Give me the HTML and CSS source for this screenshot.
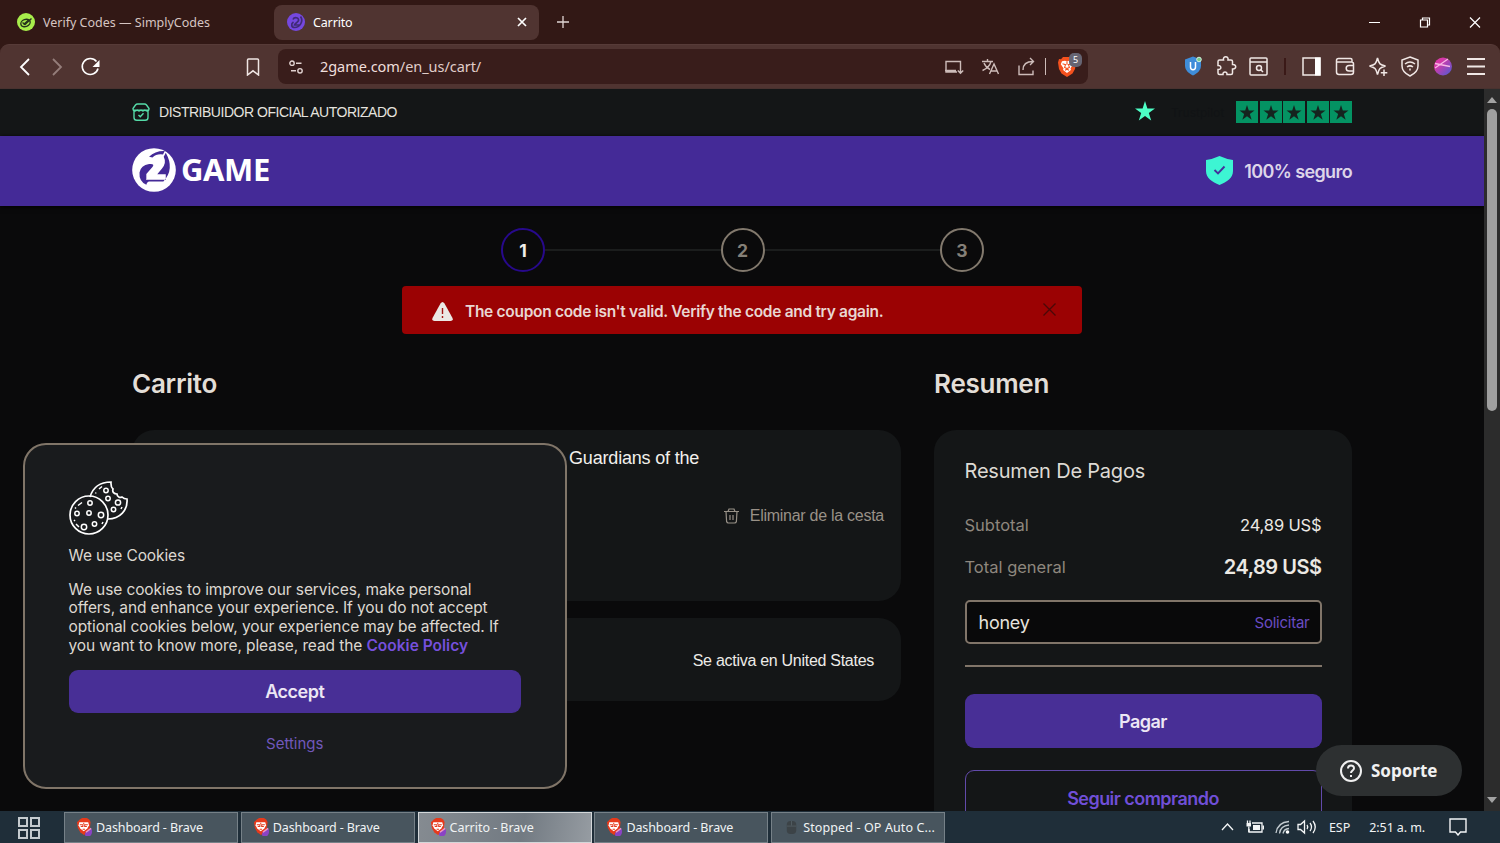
FILE: index.html
```html
<!DOCTYPE html>
<html lang="es">
<head>
<meta charset="utf-8">
<title>Carrito</title>
<link rel="stylesheet" href="styles.css">
</head>
<body>
<svg class="defs" aria-hidden="true">
  <symbol id="star" viewBox="0 0 20 20"><path d="M10 0l2.400 7.400h7.600l-6.200 4.600 2.400 7.500L10 14.900l-6.200 4.600L6.200 12 0 7.400h7.600z"/></symbol>
  <symbol id="brave" viewBox="0 0 18 20">
    <path fill="#f4511e" d="M5 0h8l2 2.200 2-.2 1 3.500-1 6.500-2.500 4.500L9 20l-5.500-3.500L1 12 0 5.500 1 2l2 .2z"/>
    <path fill="#fff" d="M4 4.300l3-.5 2 .7 2-.7 3 .5 1.200 3-2.700 3.900.4 1.800L9 16l-3.900-3 .4-1.800-2.700-3.900z"/>
    <path fill="none" stroke="#f4511e" stroke-width="1.100" d="M4.500 6.800l3 .8-.9 2.800L9 11.600l2.400-1.200-.9-2.800 3-.8M9 4.500v3.200M7 13.200l2-1 2 1"/>
  </symbol>
  <symbol id="bravetask" viewBox="0 0 18 20"><path fill="#e63a1c" d="M4 1.500L6.500 0h5L14 1.500l1.500 3-1 7-2.500 4-3.500 2.500-4-3L2 10.500 1 4.500z"/><path fill="#fff" d="M3.500 4.500h9.500l.8 3-1.800 3.500-3.800 3-3.700-3L2.700 7.500z"/><path fill="none" stroke="#e63a1c" stroke-width="1.100" d="M4 7h3.300v2H5M12.500 7H9.200v2h2.300M8.200 5v1.500M7 11.800h2.500"/><path d="M16.500 11q1.500 5-1.500 8h-5q-1.500-3 1.500-5z" fill="#8a43c4"/><path d="M10.500 15l5.500-4" stroke="#f29ac6" stroke-width="1.500"/></symbol>
</svg>
<div class="screen">
  <div class="tabs">
    <div class="tab tab-idle">
      <svg class="fav" viewBox="0 0 18 18"><circle cx="9" cy="9" r="9" fill="#a8ee4b"/><g fill="none" stroke="#26331c" stroke-width="1.400"><ellipse cx="8.500" cy="10" rx="4.800" ry="3.500" transform="rotate(-20 8.500 10)"/><path d="M5.500 9.500l2.500 2L14.500 5.500M6.500 11.500l5-4.500"/></g></svg>
      <span class="t-simply">Verify Codes — SimplyCodes</span>
    </div>
    <div class="tab tab-active">
      <svg class="fav" viewBox="0 0 18 18"><circle cx="9" cy="9" r="9" fill="#7548df"/><path d="M6 6.500C7 4 12 4 11.500 7.500 11 9.500 8 10 7.500 12H13M13.500 3.500c3.500 5-1 11-6 11-3 0-4-3.500-1-5.500" fill="none" stroke="#402a78" stroke-width="1.700"/></svg>
      <span class="t-carrito">Carrito</span>
      <svg class="close" viewBox="0 0 10 10"><path d="M1 1l8 8M9 1L1 9" stroke="#fff" stroke-width="1.700"/></svg>
    </div>
    <svg class="plus" viewBox="0 0 12 12"><path d="M6 0v12M0 6h12" stroke="#e0d5d3" stroke-width="1.300"/></svg>
    <svg class="winctl" viewBox="0 0 114 14" fill="none" stroke="#fff" stroke-width="1.200"><path d="M1 7.500h11M102 2.500l10 10M112 2.500l-10 10"/><path d="M52.500 5h7v7h-7zM54.500 4.500V3h7v7H60"/></svg>
  </div>
  <div class="toolbar">
    <svg class="nav" viewBox="0 0 100 22" fill="none" stroke="#fff" stroke-width="1.800"><path d="M18 3l-8 8 8 8"/><path d="M42 3l8 8-8 8" stroke="#957e7b"/><path d="M85.500 5.500a8 8 0 1 0 1.500 7" stroke-width="1.600"/><path d="M88.500 4v7h-7z" fill="#fff" stroke="none"/></svg>
    <svg class="bookmark" viewBox="0 0 14 18"><path d="M2.500 1h9q1 0 1 1v15L7 12.800 1.500 17V2q0-1 1-1z" fill="none" stroke="#f0e6e4" stroke-width="1.500"/></svg>
    <div class="address">
      <svg class="tune" viewBox="0 0 15 14" fill="none" stroke="#e1d2d0" stroke-width="1.400"><circle cx="3" cy="3.200" r="2.200"/><path d="M7 3.200h5.500M2 10.800h5"/><circle cx="11" cy="10.800" r="2.200"/></svg>
      <span class="url">2game.com<i>/en_us/cart/</i></span>
      <svg class="addr-icons" viewBox="0 0 146 28" fill="none" stroke="#cdbcb9" stroke-width="1.400">
        <path d="M13 19H2V8.500h14.500V14M1 17.500h11M16.500 14v6M13.800 17.500l2.700 2.700 2.700-2.700"/>
        <path d="M38 8.500h11M43.500 6v2.500M47 8.500c-1 4-4 7-8.500 9M40 10c1.500 4 4 5.500 6 6.500M45.500 21l4.500-10 4.500 10M47 18h6"/>
        <path d="M75 12.500v9h14v-4M79 17c0-6 3-8.500 10-8.500M86 5l3.500 3.500L86 12"/>
        <path d="M101.500 5v17" stroke-width="1"/>
        <use href="#brave" x="114" y="4" width="18" height="20" stroke="none"/>
      </svg>
      <span class="badge">5</span>
    </div>
    <svg class="tools" viewBox="0 0 304 28" fill="none" stroke="#f0e7e5" stroke-width="1.500">
      <path d="M9 3.500l8 3v6c0 5-4 8-8 10-4-2-8-5-8-10v-6z" fill="#3f8dd9" stroke="none"/><path d="M6.500 9v5c0 3.500 5 3.500 5 0V9" stroke="#fff"/><circle cx="15" cy="6.500" r="2.300" fill="#75c98d" stroke="#d7f4e2" stroke-width="1"/>
      <path d="M35.500 7h4c-1-4.500 5.500-4.500 4.500 0h3q1.500 0 1.500 1.500v3c4.300-.5 4.300 5 0 4.500v4q0 1.500-1.500 1.500h-4c.3-3.500-4.300-3.500-4 0h-3.500q-1.500 0-1.500-1.500v-3.500c3.800.3 3.800-4.300 0-4V8.500q0-1.500 1.500-1.500z"/>
      <path d="M67 5h15q1 0 1 1v15q0 1-1 1H67q-1 0-1-1V6q0-1 1-1zM66 9h17M76.500 16.500l2.500 2.500"/><circle cx="75" cy="15" r="2.500"/>
      <path d="M101 5v17" stroke="#33110f" stroke-width="1.500"/>
      <path d="M119 5h17v17h-17z"/><path d="M131 4.500h5.500v18H131z" fill="#fff" stroke="none"/>
      <path d="M168 9V7q0-1.500-1.500-1.500h-12Q152.500 5.500 152.500 7.500v11.500q0 2.500 2.500 2.500h12q2.500 0 2.500-2.500v-8Q169.500 9 167.500 9H153M170 12.500h-5q-2.800 0-2.800 2.800t2.800 2.800h5"/>
      <path d="M193.500 5c1.500 6 2.500 7 8 8-5.500 1.500-6.500 2.500-8 8.500-1.500-6-2.500-7-8-8.500 5.500-1 6.500-2 8-8z"/><path d="M200 16.500v6.500M196.800 19.700h6.500"/>
      <path d="M226 4l8 3v6c0 5-4 8-8 10-4-2-8-5-8-10V7z" stroke-width="1.500"/><path d="M221 11c3-2.500 7-2.500 10 0M223 14c2-1.500 4-1.500 6 0M226 15.500v2" stroke-width="1.500"/>
      <circle cx="259" cy="13.500" r="9" fill="url(#ball)" stroke="none"/><path d="M251 15l13-9M251 10.500l15 3" stroke="#f9b5e6" stroke-width="1.300"/>
      <path d="M283 6h18M283 13.500h18M283 21h18" stroke-width="1.800"/>
      <defs><linearGradient id="ball" x1="0" y1="0" x2="1" y2="1"><stop offset=".3" stop-color="#d638a8"/><stop offset="1" stop-color="#485cd4"/></linearGradient></defs>
    </svg>
  </div>
  <div class="view">
    <div class="page">
      <div class="topbar">
        <svg class="shop" viewBox="0 0 18 18" fill="none" stroke="#55dba8" stroke-width="1.400"><path d="M2 7.500v7q0 2.800 2.800 2.800h8.400q2.800 0 2.800-2.800v-7M6.500 12l1.800 1.800 3.200-3.500M1 7.300h16M1.200 7L1 5.500 3.500 2Q4.300 1 5.500 1h7q1.200 0 2 1L17 5.500 16.800 7q-1.900 1.800-3.900 0-2 1.800-3.900 0-2 1.800-3.900 0-2 1.800-3.900 0z"/></svg>
        <span class="dist">DISTRIBUIDOR OFICIAL AUTORIZADO</span>
        <svg class="tpstar" fill="#4dffc6"><use href="#star"/></svg>
        <span class="tp">Trustpilot</span>
        <div class="stars"><b><svg><use href="#star"/></svg></b><b><svg><use href="#star"/></svg></b><b><svg><use href="#star"/></svg></b><b><svg><use href="#star"/></svg></b><b><svg><use href="#star"/></svg></b></div>
      </div>
      <div class="brandbar">
        <svg class="logo" viewBox="0 0 129 129"><circle cx="64.500" cy="64.500" r="64" fill="#fff"/><g fill="#442a97"><path d="M22 72Q26 50 50 47 68 45 60 56L42 76V94H56Q44 98 42 108 20 98 22 72z"/><path d="M50 26Q68 8 96 9L91 19Q72 16 60 28z"/><path d="M99 14L93 26Q102 44 88 60L74 77H99V93H44V98H92Q126 62 99 14z"/></g></svg>
        <span class="game">GAME</span>
        <svg class="shield" viewBox="0 0 27 29"><path d="M13.500 0Q20 3 27 4v11c0 7-6 11-13.500 14C6 26 0 22 0 15V4Q7 3 13.500 0z" fill="#3df5d3"/><path d="M8.500 14l3.500 3.500 6.500-7" fill="none" stroke="#44319b" stroke-width="1.900"/></svg>
        <span class="secure">100% seguro</span>
      </div>
      <div class="steps"><span class="step on">1</span><i></i><span class="step">2</span><i></i><span class="step">3</span></div>
      <div class="alert">
        <svg class="warn" viewBox="0 0 21 19"><path d="M8.500 1.500q2-3 4 0L20.500 16q1 3-2 3h-16q-3 0-2-3z" fill="#ebe8e4"/><path d="M10.500 6v6M10.500 14v2" stroke="#a01412" stroke-width="1.400"/></svg>
        <span class="msg">The coupon code isn't valid. Verify the code and try again.</span>
        <svg class="x" viewBox="0 0 13 13"><path d="M.5.5l12 12M12.500.5l-12 12" stroke="#4a0808" stroke-width="1.300"/></svg>
      </div>
      <div class="cols">
        <div class="cart">
          <h1 class="h-cart">Carrito</h1>
          <div class="panel item">
            <span class="title">Guardians of the</span>
            <div class="remove"><svg viewBox="0 0 15 16" fill="none" stroke="#989188" stroke-width="1.200"><path d="M0 3.500h15M4 3.500L5 1h5l1 2.500M2 3.500l.6 10Q3 15 4.500 15h6q1.500 0 1.900-1.500l.6-10M6 7v5M9 7v5"/></svg><span>Eliminar de la cesta</span></div>
          </div>
          <div class="panel region"><span>Se activa en United States</span></div>
        </div>
        <div class="summary">
          <h1 class="h-sum">Resumen</h1>
          <div class="panel pay">
            <h2><span class="s-title">Resumen De Pagos</span></h2>
            <div class="row r1"><span class="s-sub">Subtotal</span><b class="v1">24,89 US$</b></div>
            <div class="row r2"><span class="s-tot">Total general</span><b class="v2">24,89 US$</b></div>
            <div class="coupon"><span class="honey">honey</span><span class="apply">Solicitar</span></div>
            <div class="rule"></div>
            <div class="btn pagar"><span>Pagar</span></div>
            <div class="btn ghost"><span>Seguir comprando</span></div>
          </div>
        </div>
      </div>
    </div>
    <div class="scroll">
      <svg viewBox="0 0 10 6"><path d="M0 6l5-6 5 6z" fill="#a3a3a3"/></svg>
      <div class="thumb"></div>
      <svg class="down" viewBox="0 0 10 6"><path d="M0 0l5 6 5-6z" fill="#a3a3a3"/></svg>
    </div>
    <div class="cookie">
      <svg class="cookies" viewBox="0 0 60 54" fill="none" stroke="#fff" stroke-width="1.700">
        <path d="M21 16C24 6 32 1 42 1c0 3-.5 5 2 7-1 3 1 5 4 5 0 3 3 4 5 3 2 2 3 2 5 2 1 11-7 20-19 20"/><circle cx="20" cy="34" r="19"/>
        <g stroke-width="1.500"><circle cx="37" cy="9.500" r="2.200"/><circle cx="39" cy="17.500" r="2.200"/><circle cx="49" cy="21.500" r="2.600"/><circle cx="44.500" cy="28.500" r="2.200"/><circle cx="21" cy="22" r="2.200"/><circle cx="8" cy="32.500" r="2.200"/><circle cx="20" cy="32" r="2.200"/><circle cx="32" cy="34" r="2.700"/><circle cx="15" cy="46" r="2.700"/><circle cx="25.500" cy="43" r="2.200"/><path d="M30 8l3-2.500M27 11.500l-.5 1M9 24.500l4-3M6 27.500l1-1M5 39l1 1M7 43l3 3M33 43l1-2M52 28l1-2"/></g>
      </svg>
      <p class="c-head"><span>We use Cookies</span></p>
      <p class="c-body"><span>We use cookies to improve our services, make personal</span><br><span>offers, and enhance your experience. If you do not accept</span><br><span>optional cookies below, your experience may be affected. If</span><br><span>you want to know more, please, read the <b>Cookie Policy</b></span></p>
      <div class="accept"><span>Accept</span></div>
      <div class="settings"><span>Settings</span></div>
    </div>
    <div class="support"><svg viewBox="0 0 22 22" fill="none" stroke="#f0f0f0" stroke-width="2"><circle cx="11" cy="11" r="10"/><path d="M8 8.500c0-4 6-4 6-.3 0 2.300-3 2.300-3 4.800M11 15v2"/></svg><span>Soporte</span></div>
  </div>
  <div class="taskbar">
    <svg class="start" viewBox="0 0 22 22" fill="none" stroke="#c5cbcf" stroke-width="2"><path d="M1 1h8v8H1zM13 1h8v8h-8zM1 13h8v8H1zM13 13h8v8h-8z"/></svg>
    <div class="task"><svg><use href="#bravetask"/></svg><span>Dashboard - Brave</span></div>
    <div class="task"><svg><use href="#bravetask"/></svg><span>Dashboard - Brave</span></div>
    <div class="task current"><svg><use href="#bravetask"/></svg><span class="k-car">Carrito - Brave</span></div>
    <div class="task"><svg><use href="#bravetask"/></svg><span>Dashboard - Brave</span></div>
    <div class="task stopped"><svg viewBox="0 0 18 20"><rect x="4" y="3" width="10" height="14" rx="4" fill="#3c4347"/><path d="M4 8.500h10M9 3v5" stroke="#525c62"/></svg><span class="k-stop">Stopped - OP Auto C...</span></div>
    <svg class="tray" viewBox="0 0 100 18" fill="none" stroke="#f4f6f7" stroke-width="1.300">
      <path d="M2 12l5.500-6 5.500 6"/>
      <path d="M32 5h10v9H29v-3"/><path d="M33 7h7v5h-7zM42.500 7.500H44v4h-1.500zM26.500 5h4.500v3.500h-4.500z" fill="#f4f6f7" stroke="none"/><path d="M27.500 2.500V5M30 2.500V5M28.800 8.500V14"/>
      <path d="M56 15C57 8 62 4 69 3.500M59.500 15.500C60 11 63.500 7.500 69 7M63 15.500c.5-2.500 2.500-4.700 6-5" stroke="#c2cbd0"/><circle cx="67.500" cy="14" r="1.800" fill="#fff" stroke="none"/>
      <path d="M78 6.500h2.500L84.500 3v12l-4-3.500H78zM87 7q1.500 2 0 4M90 5q3 4 0 8M93 3q4.500 6 0 12"/>
    </svg>
    <span class="lang">ESP</span><span class="clock">2:51 a. m.</span>
    <svg class="note" viewBox="0 0 18 18"><path d="M1 1h16v13h-5.500L9 17l-2.500-3H1z" fill="none" stroke="#f4f6f7" stroke-width="1.400"/></svg>
  </div>
</div>
</body>
</html>
```
FILE: styles.css
```css
* { box-sizing: border-box; }
body { margin: 0; background: #0a0a0b; font-family: Inter, sans-serif; }
h1, h2, p { margin: 0; font-weight: 400; }
svg { display: block; flex: none; }
span { white-space: nowrap; }
.defs { position: absolute; width: 0; height: 0; }
.screen { width: 1500px; height: 843px; display: flex; flex-direction: column; overflow: hidden; background: #321815; }

.tabs { height: 44px; flex: none; display: flex; align-items: center; font: 12.500px "Noto Sans", sans-serif; color: #d6c5c2; }
.tab { height: 35px; display: flex; align-items: center; }
.tab-idle { width: 274px; padding-left: 17px; }
.fav { width: 18px; height: 18px; margin-right: 8px; }
.tab-active { width: 265px; padding: 0 12px 0 13px; background: #503431; border-radius: 8px; color: #fff; }
.t-carrito { letter-spacing: -.15px; }
.close { width: 10px; height: 10px; margin-left: auto; }
.plus { width: 12px; height: 12px; margin-left: 18px; }
.winctl { width: 114px; height: 14px; margin: 0 18px 0 auto; }

.toolbar { height: 45px; flex: none; display: flex; align-items: center; background: #503431; border-top: 1px solid #573b38; border-bottom: 1px solid #49322f; border-radius: 9px 9px 0 0; }
.nav { width: 100px; height: 22px; margin-left: 11px; }
.bookmark { width: 14px; height: 18px; margin-left: 135px; }
.address { position: relative; width: 810px; height: 35px; margin-left: 18px; padding: 0 23px 0 11px; display: flex; align-items: center; background: #391d1b; border-radius: 8px; }
.tune { width: 15px; height: 14px; }
.url { margin: -2px 0 0 16px; font: 14.500px "Noto Sans", sans-serif; letter-spacing: -.05px; color: #f0dfdc; }
.url i { font-style: normal; color: #e0cdca; }
.addr-icons { width: 146px; height: 28px; margin-left: auto; margin-right: -25px; }
.badge { position: absolute; left: 791px; top: 4px; width: 13px; height: 14px; border-radius: 5px; background: #666472; color: #fff; font: 9px/14px "Noto Sans", sans-serif; text-align: center; }
.tools { width: 304px; height: 28px; margin-left: 96px; }

.view { position: relative; height: 722px; flex: none; display: flex; overflow: hidden; background: #0a0a0b; }
.page { width: 1484px; }
.topbar { height: 47px; padding: 0 132px 1px; display: flex; align-items: center; background: #141617; }
.shop { width: 18px; height: 18px; }
.dist { margin-left: 9px; font: 14px "Liberation Sans", sans-serif; letter-spacing: -.48px; color: #e5e3df; }
.tpstar { width: 20px; height: 20px; margin: -2px 0 0 auto; }
.tp { width: 81px; padding-left: 16px; font-size: 12px; color: #111315; }
.stars { display: flex; gap: 1.500px; margin-top: -1px; }
.stars b { width: 22px; height: 22px; padding: 4px 3px; background: #049363; }
.stars svg { width: 16px; height: 15px; fill: #15241f; }
.brandbar { height: 70px; padding: 0 132px; display: flex; align-items: center; background: #442a97; box-shadow: 0 1px 5px #000; }
.logo { width: 44px; height: 44px; margin-top: -2px; }
.game { margin: -4px 0 0 5px; font: bold 31px/44px "Noto Sans", sans-serif; letter-spacing: -.4px; color: #fff; }
.shield { width: 27px; height: 29px; margin-left: auto; margin-top: -2px; }
.secure { margin-left: 11px; font-size: 18px; font-weight: 600; letter-spacing: -.62px; color: #ddd5e9; }

.steps { width: 483px; margin: 22px 0 0 501px; display: flex; align-items: center; }
.steps i { flex: 1; height: 2px; background: #1b1d1d; }
.step { width: 44px; height: 44px; border: 2px solid #82796d; border-radius: 50%; text-align: center; font: 700 17.500px/41px Inter, sans-serif; color: #858078; }
.step.on { border-color: #27098b; color: #f0eeea; }
.alert { width: 680px; height: 48px; margin: 14px 0 0 402px; padding: 0 26px 0 30px; display: flex; align-items: center; background: #9b0203; border-radius: 4px; }
.warn { width: 21px; height: 19px; margin-top: 3px; }
.msg { margin-left: 12px; padding-top: 2px; font-size: 15.500px; font-weight: 600; letter-spacing: -.3px; color: #e9d7d2; }
.x { width: 13px; height: 13px; margin-left: auto; margin-bottom: 1px; }

.cols { display: flex; gap: 33px; padding: 33px 132px 0 132px; }
.cart { width: 769px; }
.summary { width: 418px; }
h1 { height: 63px; font: 600 26px/33px Inter, sans-serif; letter-spacing: -.25px; color: #e3ded7; }
.panel { background: #141617; border-radius: 22px; }
.item { height: 171px; padding: 16px 17px 0 0; }
.title { display: block; width: 331px; margin-left: 437px; font: 18px/24px "Liberation Sans", sans-serif; letter-spacing: -.18px; color: #f2f0ec; }
.remove { display: flex; justify-content: flex-end; align-items: center; gap: 11px; margin-top: 36px; font: 16px/20px "Liberation Sans", sans-serif; letter-spacing: -.27px; color: #999187; }
.remove svg { width: 15px; height: 16px; }
.region { height: 83px; margin-top: 17px; padding: 2px 27px 0; display: flex; align-items: center; justify-content: flex-end; font: 16px "Liberation Sans", sans-serif; letter-spacing: -.28px; color: #edebe7; }
.pay { height: 420px; padding: 27px 30.500px 0; border-radius: 22px; }
h2 { font-size: 20px; line-height: 28px; letter-spacing: -.2px; color: #dedad4; }
.row { display: flex; justify-content: space-between; align-items: center; font-size: 16.500px; color: #8e877e; }
.row b { color: #ece9e4; }
.r1 { height: 24px; margin-top: 28px; }
.r2 { height: 30px; margin-top: 15px; }
.v1 { font-weight: 400; letter-spacing: -.15px; }
.v2 { font-size: 20px; font-weight: 600; letter-spacing: -.48px; }
.coupon { height: 44px; margin-top: 18px; padding: 0 10px 0 12px; display: flex; align-items: center; justify-content: space-between; background: #09090a; border: 2px solid #817569; border-radius: 5px; }
.honey { font-size: 18px; letter-spacing: -.25px; color: #e6e2dd; }
.apply { font-size: 15px; letter-spacing: -.25px; color: #694cc4; }
.rule { height: 2px; margin-top: 21px; background: #817569; }
.btn { display: flex; align-items: center; justify-content: center; border-radius: 9px; font-size: 18px; font-weight: 600; letter-spacing: -.55px; }
.pagar { height: 54px; margin-top: 27px; background: #482f96; color: #ece7f4; }
.ghost { height: 56px; margin-top: 22px; border: 1.500px solid #624aaa; color: #704fd7; }

.scroll { width: 16px; padding: 8px 3px; display: flex; flex-direction: column; align-items: center; background: #2c2c2c; }
.scroll svg { width: 10px; height: 6px; }
.thumb { width: 10px; height: 302px; margin-top: 6px; border-radius: 5px; background: #9f9f9f; }
.scroll .down { margin-top: auto; }

.cookie { position: absolute; left: 22.500px; top: 354px; width: 544.500px; height: 346px; padding: 36px 44px; background: #191b1d; border: 2px solid #807568; border-radius: 23px; color: #ddd8d1; font-size: 15.500px; letter-spacing: -.1px; }
.cookies { width: 60px; height: 54px; }
.c-head { margin-top: 12px; line-height: 18.700px; }
.c-body { margin-top: 15px; line-height: 18.700px; }
.c-body b { font-weight: 600; color: #7650dc; letter-spacing: 0; }
.accept { height: 43px; margin-top: 14px; display: flex; align-items: center; justify-content: center; background: #482f96; border-radius: 9px; color: #ece7f4; font-size: 18px; font-weight: 600; letter-spacing: -.5px; }
.settings { margin-top: 21px; text-align: center; font-size: 15px; line-height: 20px; letter-spacing: 0; color: #7158bb; }
.support { position: absolute; left: 1316px; top: 656px; width: 146px; height: 51px; padding-left: 24px; display: flex; align-items: center; gap: 9px; background: #2d3031; border-radius: 26px; color: #f1f1f1; font: bold 17px "Noto Sans", sans-serif; }
.support svg { width: 22px; height: 22px; }

.taskbar { height: 32px; flex: none; display: flex; align-items: center; padding-right: 33px; background: #1f2e39; font: 12.500px "Noto Sans", sans-serif; color: #f0f3f4; }
.start { width: 22px; height: 22px; margin: 2px 24px 0 18px; }
.task { width: 174px; height: 31px; margin: 1px 2.800px 0 0; padding-left: 11px; display: flex; align-items: center; gap: 3px; background: #48555e; border: 1px solid #768188; letter-spacing: -.11px; }
.task svg { width: 17px; height: 19px; }
.current { background: linear-gradient(100deg, #858b91, #727a82 60%, #969ca2); border-color: #d3d7d9; }
.k-car { letter-spacing: -.03px; }
.k-stop { letter-spacing: .12px; }
.tray { width: 100px; height: 18px; margin-left: auto; }
.lang { margin-left: 9px; }
.clock { margin-left: 19px; letter-spacing: -.1px; }
.note { width: 18px; height: 18px; margin-left: 24px; }
```
